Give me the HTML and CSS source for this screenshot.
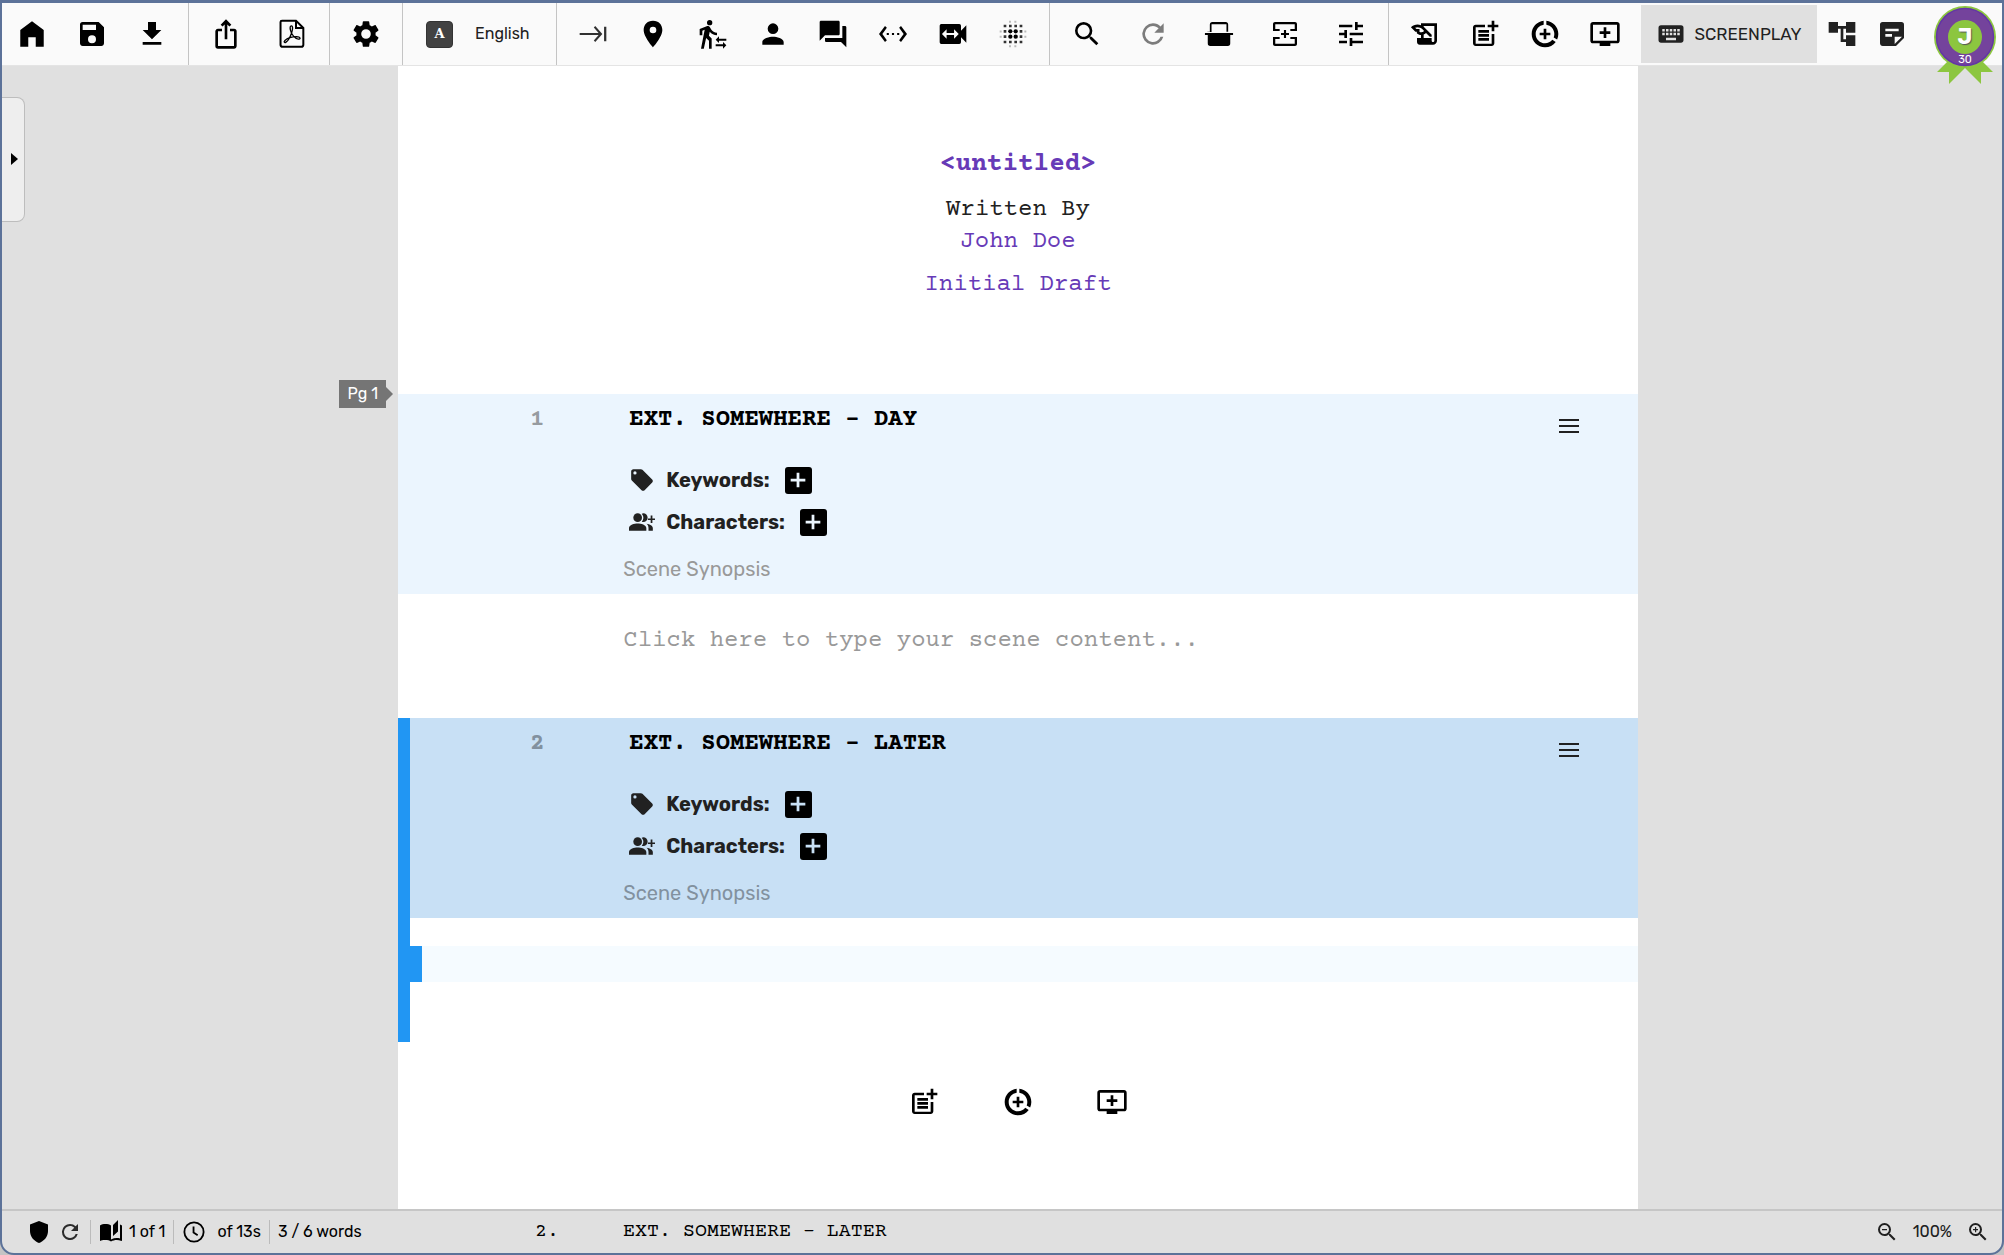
FILE: index.html
```html
<!DOCTYPE html>
<html lang="en">
<head>
<meta charset="utf-8">
<title>Screenplay editor</title>
<link rel="stylesheet" href="styles.css">
</head>
<body>
<svg class="defs" aria-hidden="true">
  <symbol id="i-search" viewBox="0 0 24 24"><path d="M15.5 14h-.79l-.28-.27A6.47 6.47 0 0 0 16 9.5 6.5 6.5 0 1 0 9.5 16c1.61 0 3.09-.59 4.23-1.57l.27.28v.79l5 4.99L20.49 19l-4.99-5zm-6 0C7.01 14 5 11.99 5 9.5S7.01 5 9.5 5 14 7.01 14 9.5 11.99 14 9.5 14z"/></symbol>
  <symbol id="i-refresh" viewBox="0 0 24 24"><path d="M17.65 6.35A7.96 7.96 0 0 0 12 4a8 8 0 1 0 7.73 10h-2.08A6 6 0 1 1 12 6c1.66 0 3.14.69 4.22 1.78L13 11h7V4l-2.35 2.35z"/></symbol>
  <symbol id="i-scene" viewBox="0 0 24 24"><path d="M17 19.22H5V7h7V5H5c-1.1 0-2 .9-2 2v12c0 1.1.9 2 2 2h12c1.1 0 2-.9 2-2v-7h-2v7.22z"/><path d="M19 2h-2v3h-3v2h3v3h2V7h3V5h-3V2zM7 9h8v2H7zM7 12h8v2H7zM7 15h8v2H7z"/></symbol>
  <symbol id="i-act" viewBox="0 0 24 24"><path d="M11 8v3H8v2h3v3h2v-3h3v-2h-3V8h-2zM13 2.05v3.03c3.39.49 6 3.39 6 6.92 0 .9-.18 1.75-.48 2.54l2.6 1.53c.56-1.24.88-2.62.88-4.07 0-5.18-3.95-9.45-9-9.95zM12 19c-3.87 0-7-3.13-7-7 0-3.53 2.61-6.43 6-6.92V2.05c-5.06.5-9 4.76-9 9.95 0 5.52 4.47 10 9.99 10 3.31 0 6.24-1.61 8.06-4.09l-2.6-1.53C16.17 17.98 14.21 19 12 19z"/></symbol>
  <symbol id="i-episode" viewBox="0 0 24 24"><path d="M21 3H3c-1.11 0-2 .89-2 2v12c0 1.1.89 2 2 2h5v2h8v-2h5c1.1 0 2-.9 2-2V5c0-1.11-.9-2-2-2zm0 14H3V5h18v12zm-5-7v2h-3v3h-2v-3H8v-2h3V7h2v3h3z"/></symbol>
  <symbol id="i-tag" viewBox="0 0 24 24"><path fill-rule="evenodd" d="M21.4 11.6l-9-9C12.05 2.22 11.55 2 11 2H4c-1.1 0-2 .9-2 2v7c0 .55.22 1.05.59 1.42l9 9c.36.36.86.58 1.41.58s1.05-.22 1.41-.59l7-7c.37-.36.59-.86.59-1.41s-.23-1.06-.6-1.4zM5.500 7A1.500 1.500 0 1 1 5.500 4 1.500 1.500 0 0 1 5.500 7z"/></symbol>
  <symbol id="i-people" viewBox="0 0 24 24"><circle cx="8" cy="8" r="4"/><path d="M0 20v-2.500C0 14.600 5 13.300 8 13.300s8 1.300 8 4.200V20zM11.800 4.300a4 4 0 0 1 1.400-.3 4 4 0 0 1 0 8 4 4 0 0 1-1.400-.3 6 6 0 0 0 0-7.400zM16.200 13.600c3 .5 5.800 1.700 5.800 3.900V20h-4v-2.500c0-1.600-.7-2.900-1.800-3.900zM20 6h1.600v2.700H24v1.500h-2.400V13H20v-2.800h-2.500V8.700H20z"/></symbol>
  <symbol id="i-menu" viewBox="0 0 24 24"><path d="M2 5h20v2H2zM2 11h20v2H2zM2 17h20v2H2z"/></symbol>
  <symbol id="i-plus" viewBox="0 0 24 24"><path d="M10.500 4h3v6.500H20v3h-6.500V20h-3v-6.500H4v-3h6.500z"/></symbol>
</svg>

<div class="window">
  <header class="toolbar">
    <div class="group">
      <button class="tool" aria-label="Home"><svg class="icon" viewBox="0 0 24 24"><path d="M12 2.500L3.200 9v12.500h6v-7h5.600v7h6V9z"/></svg></button>
      <button class="tool" aria-label="Save"><svg class="icon" viewBox="0 0 24 24"><path d="M17 3H5a2 2 0 0 0-2 2v14c0 1.100.9 2 2 2h14c1.100 0 2-.9 2-2V7l-4-4zm-5 16a3 3 0 1 1 0-6 3 3 0 0 1 0 6zm3-10H5V5h10v4z"/></svg></button>
      <button class="tool" aria-label="Download"><svg class="icon" viewBox="0 0 24 24"><path d="M19 9h-4V3H9v6H5l7 7 7-7zM5 18v2h14v-2H5z"/></svg></button>
    </div>
    <div class="group wide">
      <button class="tool" aria-label="Share"><svg class="icon" viewBox="0 0 24 24"><path d="M16 5l-1.420 1.420-1.590-1.590V16h-1.980V4.830L9.420 6.420 8 5l4-4 4 4zm4 5v11c0 1.100-.9 2-2 2H6a2 2 0 0 1-2-2V10c0-1.110.89-2 2-2h3v2H6v11h12V10h-3V8h3a2 2 0 0 1 2 2z"/></svg></button>
      <button class="tool" aria-label="Export to PDF"><svg class="icon line" viewBox="0 0 24 24"><path d="M4.500 2H15l5.500 5.500V20c0 1-.6 1.600-1.600 1.600H5c-1 0-1.600-.6-1.600-1.600V3c0-.6.5-1 1.100-1zM15 2v5.500h5.500"/><path stroke-width="1" d="M11.200 6c1.800-.7 1.300 3 .5 5.200-1 2.800-2.800 6-4.200 6.900-1.100.7-2-.2-.8-1.300 2-1.800 5.600-2.700 8.800-2.800 3 0 3.200 2 1.300 1.900-2.400-.2-5.400-3.600-6-6.900-.3-1.400-.3-2.700.4-3z"/></svg></button>
    </div>
    <div class="group solo">
      <button class="tool" aria-label="Settings"><svg class="icon" viewBox="0 0 24 24"><path d="M19.140 12.940c.04-.3.06-.61.06-.94 0-.32-.02-.64-.07-.94l2.030-1.580c.18-.14.23-.41.12-.61l-1.920-3.320c-.12-.22-.37-.29-.59-.22l-2.390.96c-.5-.38-1.030-.7-1.620-.94l-.36-2.540A.48.48 0 0 0 13.920 2.400h-3.840c-.24 0-.43.17-.47.41l-.36 2.540c-.59.24-1.130.57-1.620.94l-2.390-.96c-.22-.08-.47 0-.59.22L2.740 8.870c-.12.21-.08.47.12.61l2.030 1.580c-.05.3-.09.63-.09.94s.02.64.07.94l-2.030 1.580c-.18.14-.23.41-.12.61l1.920 3.320c.12.22.37.29.59.22l2.390-.96c.5.38 1.030.7 1.620.94l.36 2.540c.05.24.24.41.48.41h3.840c.24 0 .44-.17.47-.41l.36-2.540c.59-.24 1.130-.56 1.620-.94l2.390.96c.22.08.47 0 .59-.22l1.920-3.320c.12-.22.07-.47-.12-.61l-2.010-1.580zM12 15.600A3.600 3.600 0 1 1 12 8.400a3.600 3.600 0 0 1 0 7.200z"/></svg></button>
    </div>
    <div class="group">
      <button class="language"><span class="glyph">A</span>English</button>
    </div>
    <div class="group center">
      <button class="tool" aria-label="Tab"><svg class="icon soft" viewBox="0 0 24 24"><path d="M12.600 7.200L16.200 11.200H2v1.600h14.200l-3.600 4L13.700 18l5.300-6-5.300-6zM20.300 6.500H22v11h-1.700z"/></svg></button>
      <button class="tool" aria-label="Location"><svg class="icon" viewBox="0 0 24 24"><path d="M12 2C7.600 2 5 5.130 5 9c0 5.250 7 13 7 13s7-7.750 7-13c0-3.870-2.600-7-7-7zm0 9.500a2.500 2.500 0 1 1 0-5 2.500 2.500 0 0 1 0 5z"/></svg></button>
      <button class="tool" aria-label="Action"><svg class="icon" viewBox="0 0 24 24"><path d="M16.490 15.500v-1.750L14 16.250l2.490 2.500V17H22v-1.500zM19.510 19.750H14v1.500h5.510V23L22 20.500 19.510 18zM9.500 5.500a2 2 0 1 0 0-4 2 2 0 0 0 0 4zM5.750 8.900L3 23h2.100l1.750-8L9 17v6h2v-7.550L8.950 13.400l.6-3C10.850 12 12.800 13 15 13v-2c-1.850 0-3.450-1-4.350-2.450l-.95-1.600C9.350 6.350 8.700 6 8 6c-.25 0-.5.05-.75.15L2 8.300V13h2V9.650z"/></svg></button>
      <button class="tool" aria-label="Character"><svg class="icon" viewBox="0 0 24 24"><path d="M12 12a4 4 0 1 0 0-8 4 4 0 0 0 0 8zm0 2c-2.670 0-8 1.340-8 4v2h16v-2c0-2.660-5.330-4-8-4z"/></svg></button>
      <button class="tool" aria-label="Dialogue"><svg class="icon" viewBox="0 0 24 24"><path d="M21 6h-2v9H6v2c0 .55.45 1 1 1h11l4 4V7c0-.55-.45-1-1-1zm-4 6V3c0-.55-.45-1-1-1H3c-.55 0-1 .45-1 1v14l4-4h10c.55 0 1-.45 1-1z"/></svg></button>
      <button class="tool" aria-label="Parenthetical"><svg class="icon" viewBox="0 0 24 24"><path d="M7.400 7.300L6 6 1.500 12 6 18l1.400-1.300L4 12zM16.600 7.300L18 6l4.500 6-4.500 6-1.400-1.300L20 12zM7.300 11.200h1.600v1.600H7.300zM11.200 11.200h1.600v1.600h-1.600zM15.100 11.200h1.600v1.600h-1.600z"/></svg></button>
      <button class="tool" aria-label="Transition"><svg class="icon" viewBox="0 0 24 24"><path d="M18 9.500V6c0-.8-.5-1.500-1.300-1.500H3.300C2.500 4.500 2 5.200 2 6v12c0 .8.500 1.500 1.300 1.500h13.400c.8 0 1.300-.7 1.300-1.500v-3.500l4 4v-13zm-5.200 6v-2.700H7.200v2.700L3.700 12l3.500-3.500v2.700h5.600V8.500l3.500 3.500z"/></svg></button>
      <button class="tool" aria-label="Shot"><svg class="icon" viewBox="0 0 24 24"><g><circle cx="10" cy="10" r="1.600"/><circle cx="14" cy="10" r="1.600"/><circle cx="10" cy="14" r="1.600"/><circle cx="14" cy="14" r="1.600"/></g><path d="M5 5h2v2H5zM9 5h2v2H9zM13 5h2v2h-2zM17 5h2v2h-2zM5 9h2v2H5zM17 9h2v2h-2zM5 13h2v2H5zM17 13h2v2h-2zM5 17h2v2H5zM9 17h2v2H9zM13 17h2v2h-2zM17 17h2v2h-2z" opacity=".8"/><path d="M9 2h1.500v1.500H9zM13 2h1.500v1.500H13zM9 20.500h1.500V22H9zM13 20.500h1.500V22H13zM2 9.300h1.500v1.500H2zM2 13.300h1.500v1.500H2zM20.500 9.300H22v1.500h-1.500zM20.500 13.300H22v1.500h-1.500z" opacity=".25"/></svg></button>
    </div>
    <div class="group wide">
      <button class="tool" aria-label="Search"><svg class="icon"><use href="#i-search"/></svg></button>
      <button class="tool" aria-label="Reload" disabled><svg class="icon"><use href="#i-refresh"/></svg></button>
      <button class="tool" aria-label="Page break"><svg class="icon" viewBox="0 0 24 24"><path d="M2.500 10.500V10.400H4.500V5c0-1.200.8-2 2-2h11c1.200 0 2 .8 2 2v5.400h-1.400V4.600H5.900v5.900zM.5 11.200h23v1.600h-23zM2.800 12.800h18.400V19a2 2 0 0 1-2 2H4.800a2 2 0 0 1-2-2z" transform="translate(1 0) scale(.917 1)"/></svg></button>
      <button class="tool" aria-label="Insert page"><svg class="icon" viewBox="0 0 24 24"><path d="M3 9.800V4.500C3 3.700 3.700 3 4.500 3h15c.8 0 1.500.7 1.500 1.500v5.300h-5V8.200h3.300V4.700H4.700v3.500H8v1.600zM3 14.200v5.300c0 .8.7 1.500 1.500 1.500h15c.8 0 1.500-.7 1.500-1.500v-5.300h-5v1.600h3.300v3.500H4.700v-3.500H8v-1.600zM11.200 9h1.600v2.200H15v1.600h-2.200V15h-1.600v-2.200H9v-1.600h2.200z"/></svg></button>
      <button class="tool" aria-label="Options"><svg class="icon" viewBox="0 0 24 24"><path d="M3 17v2h6v-2H3zM3 5v2h10V5H3zm10 16v-2h8v-2h-8v-2h-2v6h2zM7 9v2H3v2h4v2h2V9H7zm14 4v-2H11v2h10zm-6-4h2V7h4V5h-4V3h-2v6z"/></svg></button>
    </div>
    <div class="group last">
      <button class="tool" aria-label="Write"><svg class="icon" viewBox="0 0 24 24"><path d="M9 4v1.380a7 7 0 0 0-2.610-.5c-1.790 0-3.580.68-4.950 2.050l3.330 3.330h1.110v1.110c.86.86 1.980 1.310 3.110 1.360V15H6v3c0 1.100.9 2 2 2h10c1.660 0 3-1.340 3-3V4H9zm-1.110 6.410V8.260H5.610L4.570 7.220a5.070 5.070 0 0 1 1.820-.34c1.340 0 2.590.52 3.540 1.460l1.410 1.410-.2.2a2.700 2.700 0 0 1-1.920.8c-.47 0-.93-.12-1.330-.34zM19 17c0 .55-.45 1-1 1s-1-.45-1-1v-2h-6v-2.590c.57-.23 1.100-.57 1.560-1.030l.2-.2L15.590 14H17v-1.410l-6-5.970V6h8v11z"/></svg></button>
      <button class="tool" aria-label="New scene"><svg class="icon"><use href="#i-scene"/></svg></button>
      <button class="tool" aria-label="New act"><svg class="icon"><use href="#i-act"/></svg></button>
      <button class="tool" aria-label="New episode"><svg class="icon"><use href="#i-episode"/></svg></button>
    </div>
    <nav class="views">
      <button class="view active"><svg class="icon" viewBox="0 0 24 24"><path d="M20 5H4a2 2 0 0 0-2 2v10c0 1.100.9 2 2 2h16c1.100 0 2-.9 2-2V7a2 2 0 0 0-2-2zm-9 3h2v2h-2V8zm0 3h2v2h-2v-2zM8 8h2v2H8V8zm0 3h2v2H8v-2zm-1 2H5v-2h2v2zm0-3H5V8h2v2zm9 7H8v-2h8v2zm0-4h-2v-2h2v2zm0-3h-2V8h2v2zm3 3h-2v-2h2v2zm0-3h-2V8h2v2z"/></svg>SCREENPLAY</button>
      <button class="view" aria-label="Structure"><svg class="icon" viewBox="0 0 24 24"><path d="M22 11V3h-7v3H9V3H2v8h7V8h2v10h4v3h7v-8h-7v3h-2V8h2v3z"/></svg></button>
      <button class="view" aria-label="Notebook"><svg class="icon" viewBox="0 0 24 24"><path d="M19 3H5a2 2 0 0 0-2 2v14c0 1.100.9 2 2 2h10l6-6V5a2 2 0 0 0-2-2zM7 8h10v2H7V8zm5 6H7v-2h5v2zm2 5.500V14h5.500L14 19.500z"/></svg></button>
    </nav>
    <button class="profile" aria-label="Profile">
      <svg class="ribbon" viewBox="0 0 64 80" aria-hidden="true"><path fill="#8cc63f" d="M15 56L4 67h12v12l16-16 16 16V67h12L49 56z"/><circle cx="32" cy="32" r="31" fill="#8cc63f"/><circle cx="32" cy="32" r="28.500" fill="#74439c" stroke="#6336a5" stroke-width="1.500"/><circle cx="32" cy="32" r="17" fill="#8cc63f"/></svg>
      <span class="initial">J</span><span class="days">30</span>
    </button>
  </header>

  <main class="workspace">
    <aside class="side"><button class="drawer" aria-label="Open side panel"><svg class="caret" viewBox="0 0 7 12"><path d="M0 0l7 6-7 6z"/></svg></button></aside>
    <article class="page">
      <header class="cover">
        <h1>&lt;untitled&gt;</h1>
        <p>Written By</p>
        <p class="accent">John Doe</p>
        <p class="accent draft">Initial Draft</p>
      </header>

      <section class="scene">
        <span class="page-tag">Pg 1</span>
        <div class="scene-head">
          <span class="number">1</span>
          <input class="slug" aria-label="Scene heading" value="EXT. SOMEWHERE - DAY">
          <button class="menu" aria-label="Scene menu"><svg><use href="#i-menu"/></svg></button>
          <div class="meta"><svg class="mark"><use href="#i-tag"/></svg>Keywords:<button class="add" aria-label="Add keyword"><svg><use href="#i-plus"/></svg></button></div>
          <div class="meta"><svg class="mark"><use href="#i-people"/></svg>Characters:<button class="add" aria-label="Add character"><svg><use href="#i-plus"/></svg></button></div>
          <input class="synopsis" aria-label="Scene synopsis" placeholder="Scene Synopsis">
        </div>
        <div class="scene-body"><input class="line" aria-label="Scene content" placeholder="Click here to type your scene content..."></div>
      </section>

      <section class="scene current">
        <div class="scene-head">
          <span class="number">2</span>
          <input class="slug" aria-label="Scene heading" value="EXT. SOMEWHERE - LATER">
          <button class="menu" aria-label="Scene menu"><svg><use href="#i-menu"/></svg></button>
          <div class="meta"><svg class="mark"><use href="#i-tag"/></svg>Keywords:<button class="add" aria-label="Add keyword"><svg><use href="#i-plus"/></svg></button></div>
          <div class="meta"><svg class="mark"><use href="#i-people"/></svg>Characters:<button class="add" aria-label="Add character"><svg><use href="#i-plus"/></svg></button></div>
          <input class="synopsis" aria-label="Scene synopsis" placeholder="Scene Synopsis">
        </div>
        <div class="scene-body"><input class="line" aria-label="Scene content"></div>
      </section>

      <div class="append">
        <button aria-label="New scene"><svg class="icon"><use href="#i-scene"/></svg></button>
        <button aria-label="New act"><svg class="icon"><use href="#i-act"/></svg></button>
        <button aria-label="New episode"><svg class="icon"><use href="#i-episode"/></svg></button>
      </div>
    </article>
  </main>

  <footer class="status">
    <div class="stats">
      <div class="stat lead">
        <svg class="small shield" viewBox="0 0 24 24"><path d="M12 1L3 4.500V11c0 5.800 3.800 10 9 12 5.200-2 9-6.200 9-12V4.500z"/></svg>
        <svg class="small soft"><use href="#i-refresh"/></svg>
      </div>
      <div class="stat"><svg class="small" viewBox="0 0 24 24"><path d="M19 0l-5 5v11l5-4.500zM1 5.500v15.600C3 20 4.500 19.800 6.500 20c2 0 4 .4 5.500 1.500V5.500C10.500 4.400 8.500 4 6.500 4S2.400 4.400 1 5.500zM23 19.500V5.500c-.6-.5-1.200-.8-2-1v14c-3-.8-6-.4-9 1v2c3-1.500 6.700-2 10.500-.5.300 0 .5-.2.5-.5z"/></svg>1 of 1</div>
      <div class="stat time"><svg class="small line" viewBox="0 0 24 24"><circle cx="12" cy="12" r="10.500"/><path d="M11.500 6v6.500l4.500 3"/></svg>of 13s</div>
      <div class="stat">3 / 6 words</div>
    </div>
    <span class="at-number">2.</span>
    <span class="at-scene">EXT. SOMEWHERE - LATER</span>
    <div class="zoom">
      <button aria-label="Zoom out"><svg class="small" viewBox="0 0 24 24"><use href="#i-search"/><path d="M7 9h5v1.200H7z"/></svg></button>
      <span>100%</span>
      <button aria-label="Zoom in"><svg class="small" viewBox="0 0 24 24"><use href="#i-search"/><path d="M9 7h1.200v2H12v1.200h-1.800v2H9v-2H7V9h2z"/></svg></button>
    </div>
  </footer>
</div>
</body>
</html>
```
FILE: styles.css
```css
:root {
  --ui: Rubik, Inter, sans-serif;
  --script: "Courier Prime", "Liberation Mono", monospace;
  --frame: #5c7299;
  --grey: #e0e0e0;
  --blue: #2196f3;
  --purple: #673ab7;
}

* { box-sizing: border-box; }

body {
  margin: 0;
  background: #c4c4c4;
  color: #212121;
  font: 17px/24px var(--ui);
}

button, input {
  margin: 0;
  padding: 0;
  border: 0;
  background: none;
  color: inherit;
  font: inherit;
}

svg { display: block; fill: currentColor; }
.defs { display: none; }
.icon { width: 32px; height: 32px; }
svg.line { fill: none; stroke: currentColor; stroke-width: 1.5; }
.soft { opacity: .8; }

.window {
  display: flex;
  flex-direction: column;
  min-height: 100vh;
  border: 2px solid var(--frame);
  border-top-width: 3px;
  border-radius: 0 0 14px 14px;
  background: var(--grey);
  overflow: hidden;
}

/* Toolbar */
.toolbar {
  display: flex;
  height: 63px;
  border-bottom: 1px solid #e4e4e4;
  background: #fafafa;
}
.group {
  display: flex;
  align-items: center;
  padding-right: 6px;
  border-right: 1px solid #c4c4c4;
  color: #000;
}
.group.center, .group.solo { padding: 0 6px; }
.group.wide { padding: 0 4px; }
.group.last { padding: 0 0 0 6px; border: 0; }
.tool {
  display: grid;
  place-items: center;
  width: 60px;
  height: 60px;
}
.wide .tool { width: 66px; }
.tool:disabled { opacity: .5; }
.language {
  display: flex;
  align-items: center;
  gap: 22px;
  width: 147px;
  padding-left: 23px;
  color: #212121;
  font-size: 16px;
}
.glyph {
  display: grid;
  place-items: center;
  width: 27px;
  height: 27px;
  border: 1px solid #333;
  border-radius: 4px;
  background: #424242;
  color: #fff;
  font: bold 13px/20px "DejaVu Serif", serif;
}

.views { display: flex; align-items: flex-start; margin-left: 6px; padding-top: 2px; }
.view {
  display: flex;
  align-items: center;
  justify-content: center;
  gap: 8px;
  width: 50px;
  height: 58px;
}
.view.active { width: 176px; background: var(--grey); }
.view.active .icon { width: 30px; height: 30px; }
.profile {
  position: relative;
  z-index: 1;
  width: 64px;
  height: 80px;
  margin: 2px 5px 0 auto;
  color: #fff;
}
.ribbon { width: 64px; height: 80px; }
.initial, .days { position: absolute; left: 0; width: 100%; text-align: center; }
.initial { top: 20px; font-size: 22px; font-weight: 700; text-shadow: 1px 1px 1px #555; }
.days { top: 47px; font-size: 11px; line-height: 16px; }

/* Workspace */
.workspace { display: flex; flex: 1; padding-right: 1px; }
.side { width: 33px; padding-top: 31px; }
.drawer {
  display: grid;
  place-items: center;
  width: 23px;
  height: 125px;
  padding: 0 0 2px 2px;
  border: 1px solid #bdbdbd;
  border-left: 0;
  border-radius: 0 8px 8px 0;
  background: #eee;
  color: #000;
}
.caret { width: 7px; height: 12px; }
.page {
  width: 62%;
  margin: 0 auto;
  background: #fff;
  font: 24px/32px var(--script);
}
.cover { height: 328px; padding-top: 83px; text-align: center; }
.cover h1 { margin: 0 0 13px; color: var(--purple); font-size: 26px; line-height: 32px; }
.cover p { margin: 0; }
.cover .accent { color: var(--purple); }
.cover .draft { margin-top: 11px; }

.scene { position: relative; }
.page-tag {
  position: absolute;
  top: -14px;
  right: calc(100% + 12px);
  width: 47px;
  height: 28px;
  background: #757575;
  color: #fff;
  font: 16px/28px var(--ui);
  text-align: center;
}
.page-tag::after {
  content: "";
  position: absolute;
  left: 100%;
  top: 7px;
  border: 7px solid transparent;
  border-left-color: #757575;
  border-right: 0;
}
.scene-head {
  display: grid;
  grid-template-columns: 231px 1fr 81px;
  grid-template-rows: 65px 42px 42px 51px;
  height: 200px;
  background: #ebf5fe;
}
.number { padding: 10px 85px 0 0; color: #969ba0; font-weight: 700; text-align: right; }
.slug { height: 32px; margin-top: 10px; color: #000; font-weight: 700; }
.menu { width: 24px; height: 24px; margin-top: 20px; }
.menu svg { width: 24px; height: 24px; }
.meta {
  display: flex;
  grid-column: 2 / -1;
  align-items: center;
  font: 700 20px/24px var(--ui);
}
.mark { width: 26px; height: 26px; margin-right: 11px; }
.add {
  display: grid;
  place-items: center;
  width: 27px;
  height: 27px;
  margin-left: 15px;
  border-radius: 3px;
  background: #000;
  color: #ebf5fe;
}
.add svg { width: 22px; height: 22px; }
.synopsis {
  grid-column: 1 / -1;
  height: 28px;
  margin: 12px 90px 0 225px;
  font: 20px/28px var(--ui);
}
input::placeholder { color: #999; opacity: 1; }
.scene-body { padding: 28px 0 60px; }
input.line { display: block; width: 100%; height: 36px; padding: 0 90px 0 225px; }

.current .scene-head { background: #c8e0f5; }
.current .number, .current ::placeholder { color: #82919f; }
.current .add { color: #c8e0f5; }
.current::before {
  content: "";
  position: absolute;
  inset: 0 auto 0 0;
  width: 12px;
  background: var(--blue);
}
.current input.line { border-left: 24px solid var(--blue); background: #f5fbff; padding-left: 201px; }

.append { display: flex; justify-content: center; gap: 62px; padding: 44px 0 90px; color: #000; }
.append button { width: 32px; height: 32px; }

/* Status bar */
.status {
  display: flex;
  align-items: center;
  height: 44px;
  border-top: 2px solid #c6c6c6;
  color: #000;
  font: 20px/24px var(--script);
}
.stats { display: flex; width: 533px; padding-left: 25px; font: 16px/24px var(--ui); }
.stat {
  display: flex;
  align-items: center;
  gap: 6px;
  padding: 0 8px;
  border-left: 1px solid #bbb;
}
.stat.lead { gap: 7px; padding: 0 8px 0 0; border: 0; }
.stat.time { gap: 12px; padding-left: 9px; }
.small { width: 24px; height: 24px; }
.small.line { width: 22px; height: 22px; stroke-width: 2; }
.at-number { width: 88px; }
.zoom {
  display: flex;
  align-items: center;
  gap: 14px;
  margin-left: auto;
  padding-right: 12px;
  color: #212121;
  font: 16px/24px var(--ui);
}
```
